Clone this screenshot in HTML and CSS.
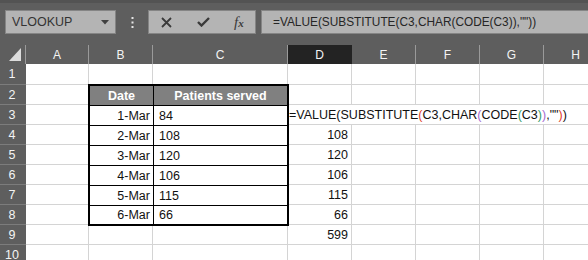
FILE: index.html
```html
<!DOCTYPE html>
<html>
<head>
<meta charset="utf-8">
<link rel="stylesheet" href="styles.css">
</head>
<body>
<div class="toolbar">
  <div class="namebox">
    <span class="name">VLOOKUP</span>
    <svg class="caret" width="8" height="5" viewBox="0 0 8 5"><path d="M0 0H8L4 4.5Z" fill="#404040"/></svg>
  </div>
  <div class="grip">
    <svg width="3" height="11" viewBox="0 0 3 11"><rect x="0.5" y="0" width="2" height="2" fill="#e6e6e6"/><rect x="0.5" y="4.5" width="2" height="2" fill="#e6e6e6"/><rect x="0.5" y="9" width="2" height="2" fill="#e6e6e6"/></svg>
  </div>
  <div class="fbtns">
    <svg class="ico-x" width="11" height="11" viewBox="0 0 11 11"><path d="M1 1L10 10M10 1L1 10" stroke="#3a3a3a" stroke-width="1.8" fill="none"/></svg>
    <svg class="ico-ok" width="13" height="10" viewBox="0 0 13 10"><path d="M1 5L4.5 8.5L12 1" stroke="#3a3a3a" stroke-width="2.4" fill="none"/></svg>
    <span class="fx">f<span class="fx-x">x</span></span>
  </div>
  <div class="fbox">=VALUE(SUBSTITUTE(C3,CHAR(CODE(C3)),""))</div>
</div>

<div class="sheet">
  <div class="corner"><svg width="12" height="13" viewBox="0 0 12 13"><path d="M12 0V13H0Z" fill="#dcdcdc"/></svg></div>
  <div class="ch">A</div><div class="ch">B</div><div class="ch">C</div><div class="ch sel">D</div><div class="ch">E</div><div class="ch">F</div><div class="ch">G</div><div class="ch">H</div>

  <div class="rh">1</div>
  <div class="c"></div><div class="c"></div><div class="c"></div><div class="c"></div><div class="c"></div><div class="c"></div><div class="c"></div><div class="c"></div>

  <div class="tbl">
    <div class="th">Date</div><div class="th">Patients served</div>
    <div class="td date">1-Mar</div><div class="td num">84</div>
    <div class="td date">2-Mar</div><div class="td num">108</div>
    <div class="td date">3-Mar</div><div class="td num">120</div>
    <div class="td date">4-Mar</div><div class="td num">106</div>
    <div class="td date">5-Mar</div><div class="td num">115</div>
    <div class="td date last">6-Mar</div><div class="td num last">66</div>
  </div>

  <div class="rh">2</div>
  <div class="c"></div><div class="c"></div><div class="c"></div><div class="c"></div><div class="c"></div><div class="c"></div>

  <div class="rh">3</div>
  <div class="c"></div>
  <div class="c formula">=VALUE(SUBSTITUTE<span class="p-red">(</span>C3,CHAR<span class="p-pur">(</span>CODE<span class="p-grn">(</span>C3<span class="p-grn">)</span><span class="p-pur">)</span>,""<span class="p-red">)</span>)</div>

  <div class="rh">4</div>
  <div class="c"></div><div class="c r">108</div><div class="c"></div><div class="c"></div><div class="c"></div><div class="c"></div>

  <div class="rh">5</div>
  <div class="c"></div><div class="c r">120</div><div class="c"></div><div class="c"></div><div class="c"></div><div class="c"></div>

  <div class="rh">6</div>
  <div class="c"></div><div class="c r">106</div><div class="c"></div><div class="c"></div><div class="c"></div><div class="c"></div>

  <div class="rh">7</div>
  <div class="c"></div><div class="c r">115</div><div class="c"></div><div class="c"></div><div class="c"></div><div class="c"></div>

  <div class="rh">8</div>
  <div class="c"></div><div class="c r">66</div><div class="c"></div><div class="c"></div><div class="c"></div><div class="c"></div>

  <div class="rh">9</div>
  <div class="c"></div><div class="c"></div><div class="c"></div><div class="c r">599</div><div class="c"></div><div class="c"></div><div class="c"></div><div class="c"></div>

  <div class="rh">10</div>
  <div class="c"></div><div class="c"></div><div class="c"></div><div class="c"></div><div class="c"></div><div class="c"></div><div class="c"></div><div class="c"></div>
</div>
</body>
</html>
```

FILE: styles.css
```css
html, body {
  margin: 0;
  padding: 0;
}
body {
  width: 588px;
  height: 260px;
  overflow: hidden;
  background: #5e5e5e;
  font-family: "Liberation Sans", Arial, sans-serif;
}

/* ---------- formula toolbar ---------- */
.toolbar {
  height: 45px;
  box-sizing: border-box;
  border-top: 3px solid #535353;
  padding-top: 7px;
  display: flex;
  align-items: flex-start;
}
.namebox {
  margin-left: 5px;
  width: 111px;
  height: 24px;
  box-sizing: border-box;
  background: #b4b4b4;
  border: 1px solid #858585;
  display: flex;
  align-items: center;
  justify-content: space-between;
  padding: 0 6px 0 6px;
}
.name {
  font-size: 12.5px;
  color: #333;
}
.caret {
  display: block;
}
.grip {
  width: 32px;
  height: 24px;
  display: flex;
  align-items: center;
  justify-content: center;
}
.grip svg {
  display: block;
}
.fbtns {
  width: 108px;
  height: 24px;
  box-sizing: border-box;
  background: #b4b4b4;
  border: 1px solid #858585;
  display: flex;
  align-items: center;
  padding-left: 12px;
}
.ico-x {
  display: block;
}
.ico-ok {
  display: block;
  margin-left: 25px;
}
.fx {
  margin-left: 24px;
  font-family: "Liberation Serif", "Times New Roman", serif;
  font-style: italic;
  font-size: 15px;
  color: #3a3a3a;
  line-height: 1;
}
.fx-x {
  font-size: 11px;
  font-weight: bold;
}
.fbox {
  margin-left: 5px;
  flex: 1;
  height: 24px;
  box-sizing: border-box;
  background: #b4b4b4;
  border: 1px solid #858585;
  border-right: 0;
  padding-left: 11px;
  display: flex;
  align-items: center;
  font-size: 11.85px;
  color: #262626;
  white-space: nowrap;
}

/* ---------- sheet grid ---------- */
.sheet {
  width: 608px;
  display: grid;
  grid-template-columns: 26px 63px 64px 135px 64px 64px 64px 64px 64px;
  grid-template-rows: 19px 21px repeat(9, 20px);
  background: #ffffff;
}
.corner {
  background: #5e5e5e;
  border-right: 1px solid #9a9a9a;
  box-sizing: border-box;
  display: flex;
  align-items: flex-end;
  justify-content: flex-end;
  padding: 0 4px 3px 0;
}
.corner svg {
  display: block;
}
.ch {
  background: #5e5e5e;
  color: #f4f4f4;
  border-right: 1px solid #9a9a9a;
  box-sizing: border-box;
  display: flex;
  align-items: center;
  justify-content: center;
  font-size: 12px;
}
.ch.sel {
  background: #232323;
  border-right-color: #232323;
}
.rh {
  background: #5e5e5e;
  color: #f4f4f4;
  border-bottom: 1px solid #7c7c7c;
  box-sizing: border-box;
  display: flex;
  align-items: center;
  justify-content: center;
  font-size: 12.5px;
  padding-right: 2px;
}
.c {
  background: #ffffff;
  border-right: 1px solid #d4d4d4;
  border-bottom: 1px solid #d4d4d4;
  box-sizing: border-box;
  display: flex;
  align-items: flex-end;
  padding: 0 2px 2px 2px;
  font-size: 12.5px;
  color: #111;
  white-space: nowrap;
}
.c.r {
  justify-content: flex-end;
  padding-right: 3px;
}
.c.formula {
  grid-column: span 5;
  padding-left: 1px;
  border-right: 0;
}
.p-red { color: #e0402a; }
.p-pur { color: #a36ad1; }
.p-grn { color: #2f9a63; }

/* ---------- bordered table B2:C8 ---------- */
.tbl {
  grid-column: 3 / 5;
  grid-row: 3 / 10;
  margin: -1px;
  border: 2px solid #000;
  background: #ffffff;
  display: grid;
  grid-template-columns: 64px 1fr;
  grid-template-rows: repeat(6, 20px) 1fr;
  position: relative;
  z-index: 1;
}
.th {
  background: #808080;
  color: #ffffff;
  font-weight: bold;
  font-size: 12.5px;
  display: flex;
  align-items: flex-end;
  justify-content: center;
  padding-bottom: 2px;
  border-bottom: 1px solid #000;
  box-sizing: border-box;
}
.th:first-child {
  border-right: 1px solid #000;
}
.td {
  display: flex;
  align-items: flex-end;
  padding-bottom: 2px;
  border-bottom: 1px solid #000;
  box-sizing: border-box;
  font-size: 12.5px;
  color: #111;
}
.td.last {
  border-bottom: 0;
}
.td.date {
  justify-content: flex-end;
  padding-right: 3px;
  border-right: 1px solid #000;
}
.td.num {
  padding-left: 5px;
}
```
